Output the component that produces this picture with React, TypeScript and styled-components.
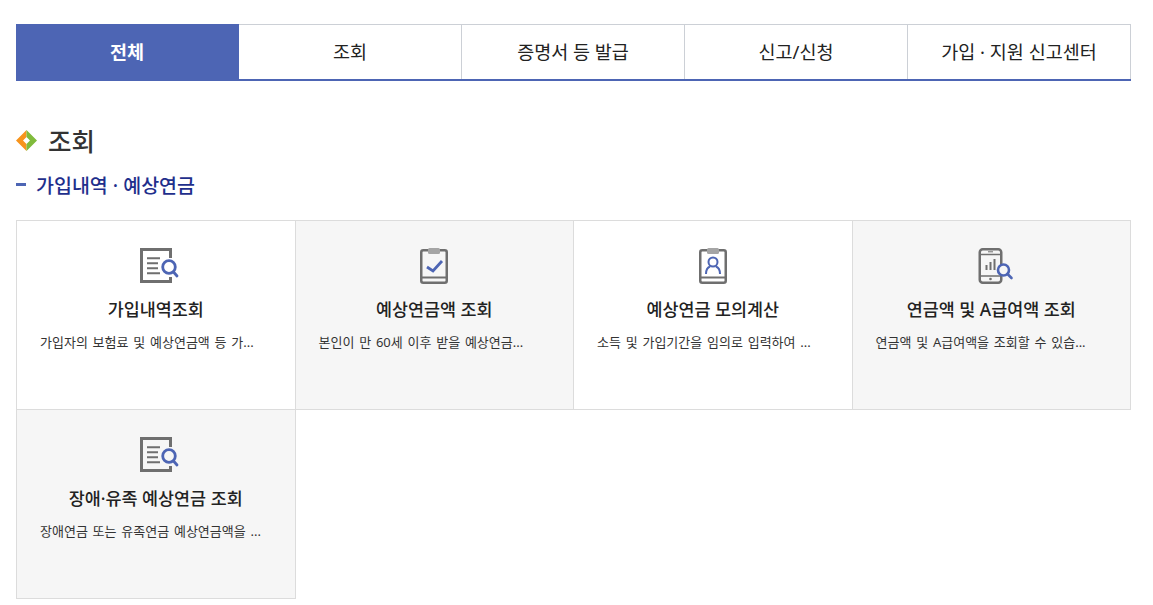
import styled, {createGlobalStyle} from "styled-components";

const GlobalStyle = createGlobalStyle`
  html, body {
    margin: 0;
    padding: 0;
    background: #fff;
    font-family: "Noto Sans", "Noto Sans CJK KR", sans-serif;
    color: #222;
  }
`;
const Container = styled.div`
  padding: 24px 22px 0 16px;
`;
const Tabs = styled.ul`
  display: grid;
  grid-template-columns: repeat(5, 1fr);
  height: 57px;
  margin: 0;
  padding: 0;
  list-style: none;
  box-sizing: border-box;
  border-bottom: 2px solid #4d65b4;
`;
const Tab = styled.li<{$active?: boolean}>`
  display: flex;
  align-items: center;
  justify-content: center;
  box-sizing: border-box;
  height: 55px;
  padding-bottom: 2px;
  border-top: 1px solid ${(props) => (props.$active ? "#4d65b4" : "#ccd0d6")};
  border-right: 1px solid ${(props) => (props.$active ? "#4d65b4" : "#ccd0d6")};
  background: ${(props) => (props.$active ? "#4d65b4" : "#fff")};
  color: ${(props) => (props.$active ? "#fff" : "#222")};
  font-size: 18.5px;
  font-weight: ${(props) => (props.$active ? 700 : 400)};
`;
const Heading = styled.h2`
  display: flex;
  align-items: center;
  gap: 11px;
  height: 36px;
  margin: 40px 0 0;
  font-size: 25.5px;
  font-weight: 500;
  color: #333;
`;
const Bullet = styled.svg`
  margin-top: 2px;
`;
const SubHeading = styled.h3`
  display: flex;
  align-items: center;
  gap: 10px;
  height: 26px;
  margin: 14px 0 0;
  font-size: 19.5px;
  font-weight: 500;
  color: #1f2f8c;
  &::before {
    content: "";
    width: 10px;
    height: 3px;
    background: #4d65b4;
  }
`;
const CardGrid = styled.div`
  display: grid;
  grid-template-columns: repeat(4, 1fr);
  grid-auto-rows: 189px;
  margin-top: 23px;
  padding: 1px 0 0 1px;
`;
const Card = styled.div<{$gray?: boolean}>`
  display: flex;
  flex-direction: column;
  align-items: center;
  box-sizing: border-box;
  min-width: 0;
  margin: -1px 0 0 -1px;
  padding: 26px 23px 0;
  border: 1px solid #dcdcdc;
  background: ${(props) => (props.$gray ? "#f6f6f6" : "#fff")};
`;
const IconBox = styled.div`
  display: flex;
  justify-content: center;
  width: 48px;
  height: 40px;
`;
const CardTitle = styled.strong`
  margin-top: 10px;
  font-size: 17.4px;
  font-weight: 500;
  line-height: 24px;
  color: #222;
  white-space: nowrap;
`;
const CardDesc = styled.p`
  width: 100%;
  margin: 11px 0 0;
  font-size: 13px;
  line-height: 20px;
  word-spacing: 1.4px;
  color: #333;
  white-space: nowrap;
`;

const GRAY = "#6f6f6f";
const BLUE = "#4d65b4";

function Diamond() {
  return (
    <Bullet width="21" height="21" viewBox="0 0 21 21">
      <path d="M10.5 0L0 10.5L10.5 21L10.5 14L7 10.5L10.5 7Z" fill="#f7941d" />
      <path d="M10.5 0L21 10.5L10.5 21L10.5 14L14 10.5L10.5 7Z" fill="#80bb3c" />
    </Bullet>
  );
}

function DocSearchIcon() {
  return (
    <svg width="48" height="40" viewBox="0 0 48 40" fill="none">
      <path d="M38.5 11V2.5H9.5V34.5H38.5V30" stroke={GRAY} strokeWidth="3" />
      <path d="M15 11.3H28M15 16.3H26M15 21.3H26M15 26.3H28" stroke={GRAY} strokeWidth="2" />
      <circle cx="37" cy="20" r="6.3" stroke={BLUE} strokeWidth="2.8" />
      <path d="M41.5 25L45 29" stroke={BLUE} strokeWidth="2.8" strokeLinecap="round" />
    </svg>
  );
}

function CheckBoardIcon() {
  return (
    <svg width="48" height="40" viewBox="0 0 48 40" fill="none">
      <rect x="11.25" y="3.25" width="25.5" height="32.5" rx="2" stroke={GRAY} strokeWidth="2.5" />
      <path d="M11 30.5H37" stroke={GRAY} strokeWidth="2" />
      <rect x="18" y="1" width="12" height="6" rx="1.5" fill="#a5a5a5" />
      <path d="M17 20L23 24L32 14" stroke={BLUE} strokeWidth="2.8" />
    </svg>
  );
}

function PersonBoardIcon() {
  return (
    <svg width="48" height="40" viewBox="0 0 48 40" fill="none">
      <rect x="11.25" y="3.25" width="25.5" height="32.5" rx="2" stroke={GRAY} strokeWidth="2.5" />
      <path d="M11 30.5H37" stroke={GRAY} strokeWidth="2" />
      <rect x="18" y="1" width="12" height="6" rx="1.5" fill="#a5a5a5" />
      <circle cx="24" cy="15" r="4.5" stroke={BLUE} strokeWidth="2" />
      <path d="M17 27C17 23 18.5 20.5 21 19.5M31 27C31 23 29.5 20.5 27 19.5" stroke={BLUE} strokeWidth="2" />
    </svg>
  );
}

function PhoneSearchIcon() {
  return (
    <svg width="48" height="40" viewBox="0 0 48 40" fill="none">
      <rect x="12.75" y="2.25" width="21.5" height="33.5" rx="3" stroke={GRAY} strokeWidth="2.5" />
      <path d="M13 7.5H34M13 29H34" stroke={GRAY} strokeWidth="1.6" />
      <path d="M21 4.8H26" stroke={GRAY} strokeWidth="1" />
      <circle cx="23.5" cy="32" r="1.3" fill={GRAY} />
      <path d="M19.5 23V18M23.5 23V15M27.5 23V12" stroke={GRAY} strokeWidth="2" />
      <circle cx="36.5" cy="23" r="5.5" fill="#f6f6f6" stroke={BLUE} strokeWidth="2.6" />
      <path d="M40.5 27L44.5 31" stroke={BLUE} strokeWidth="2.6" strokeLinecap="round" />
    </svg>
  );
}

const tabs = ["전체", "조회", "증명서 등 발급", "신고/신청", "가입 · 지원 신고센터"];

const cards = [
  {
    title: "가입내역조회",
    desc: "가입자의 보험료 및 예상연금액 등 가...",
    icon: <DocSearchIcon />,
  },
  {
    title: "예상연금액 조회",
    desc: "본인이 만 60세 이후 받을 예상연금...",
    icon: <CheckBoardIcon />,
    gray: true,
  },
  {
    title: "예상연금 모의계산",
    desc: "소득 및 가입기간을 임의로 입력하여 ...",
    icon: <PersonBoardIcon />,
  },
  {
    title: "연금액 및 A급여액 조회",
    desc: "연금액 및 A급여액을 조회할 수 있습...",
    icon: <PhoneSearchIcon />,
    gray: true,
  },
  {
    title: "장애·유족 예상연금 조회",
    desc: "장애연금 또는 유족연금 예상연금액을 ...",
    icon: <DocSearchIcon />,
    gray: true,
  },
];

export default function App() {
  return (
    <Container>
      <GlobalStyle />
      <Tabs>
        {tabs.map((tab, i) => (
          <Tab key={tab} $active={i === 0}>
            {tab}
          </Tab>
        ))}
      </Tabs>
      <Heading>
        <Diamond />
        조회
      </Heading>
      <SubHeading>가입내역 · 예상연금</SubHeading>
      <CardGrid>
        {cards.map((card) => (
          <Card key={card.title} $gray={card.gray}>
            <IconBox>{card.icon}</IconBox>
            <CardTitle>{card.title}</CardTitle>
            <CardDesc>{card.desc}</CardDesc>
          </Card>
        ))}
      </CardGrid>
    </Container>
  );
}
